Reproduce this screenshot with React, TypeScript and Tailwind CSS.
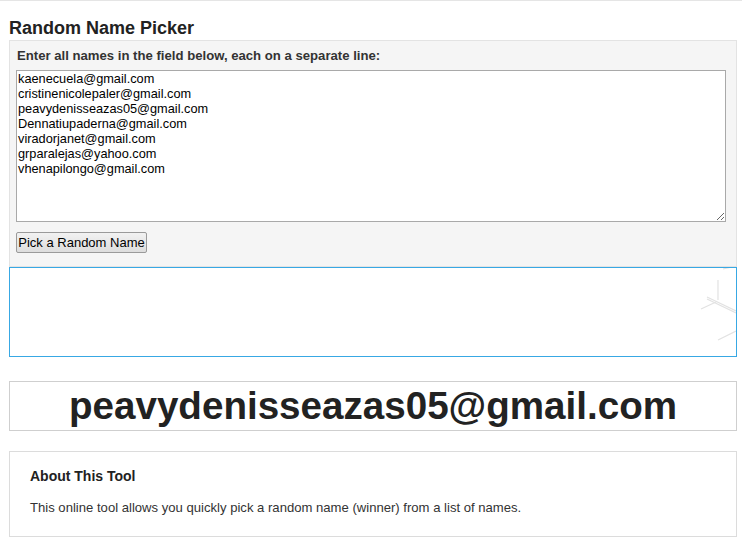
const names = [
  "kaenecuela@gmail.com",
  "cristinenicolepaler@gmail.com",
  "peavydenisseazas05@gmail.com",
  "Dennatiupaderna@gmail.com",
  "viradorjanet@gmail.com",
  "grparalejas@yahoo.com",
  "vhenapilongo@gmail.com",
];

const Spinner = () => (
  <svg
    className="absolute right-0 top-0"
    width="40"
    height="88"
    viewBox="0 0 40 88"
    fill="none"
    stroke="#e2e2e2"
    strokeWidth="1.2"
  >
    <line x1="27" y1="1" x2="36" y2="-1" />
    <line x1="22" y1="12" x2="22" y2="32" />
    <line x1="11" y1="29" x2="40" y2="43" />
    <line x1="11" y1="31" x2="40" y2="45" />
    <line x1="5" y1="41" x2="20" y2="34" />
    <line x1="22" y1="72" x2="40" y2="63" />
  </svg>
);

export default function App() {
  return (
    <div className="min-h-screen bg-white font-['Liberation_Sans',Arial,sans-serif] text-[#222]">
      <div className="w-[742px] border-t border-[#e5e5e5] pl-[9px] pt-[16px]">
        <h1 className="text-[18px] leading-[22px] font-bold text-[#222]">Random Name Picker</h1>

        <div className="mt-[1px] w-[728px] border border-[#e3e3e3] bg-[#f5f5f5] pl-[6px] pt-[6px] pb-[12px]">
          <p className="pl-[1px] text-[13.15px] leading-[17px] font-bold text-[#333]">
            Enter all names in the field below, each on a separate line:
          </p>
          <textarea
            className="mt-[6px] block h-[152px] w-[710px] border border-[#a9a9a9] bg-white px-[1px] pt-0 pb-[1px] text-[12.75px] leading-[15px] text-black outline-none"
            defaultValue={names.join("\n")}
          />
          <button className="mt-[10px] h-[21px] w-[131px] rounded-[2px] border border-[#9a9a9a] bg-gradient-to-b from-[#f2f2f2] to-[#dddddd] text-[13px] leading-[15px] text-black">
            Pick a Random Name
          </button>
        </div>

        <div className="relative h-[90px] w-[728px] overflow-hidden border border-[#38a8e4] bg-white">
          <Spinner />
        </div>

        <div className="mt-[24px] flex h-[50px] w-[728px] items-center justify-center border border-[#cfcfcf]">
          <span className="text-[38.6px] leading-[40px] font-bold text-[#222]">
            peavydenisseazas05@gmail.com
          </span>
        </div>

        <div className="mt-[20px] h-[86px] w-[728px] border border-[#dcdcdc] px-[20px] pt-[15px]">
          <h2 className="text-[14px] leading-[18px] font-bold text-[#222]">About This Tool</h2>
          <p className="mt-[14px] text-[13.1px] leading-[17px] text-[#333]">
            This online tool allows you quickly pick a random name (winner) from a list of names.
          </p>
        </div>
      </div>
    </div>
  );
}
